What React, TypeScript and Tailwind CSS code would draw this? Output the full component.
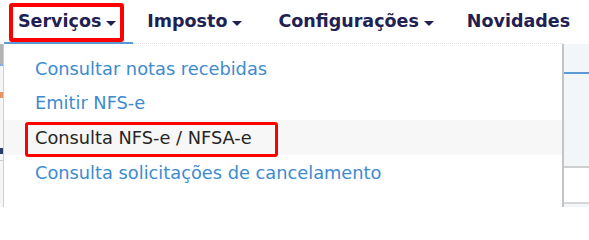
import React from "react";

const Caret = () => (
  <span className="ml-[5px] inline-block h-0 w-0 border-x-[5px] border-t-[5px] border-x-transparent border-t-[#1e2152] translate-y-[2px]" />
);

const NavItem = ({ label, caret, className }: { label: string; caret?: boolean; className?: string }) => (
  <div className={"flex items-center " + (className ?? "")}>
    <span className="font-bold text-[17.5px] text-[#1e2152] leading-none">{label}</span>
    {caret && <Caret />}
  </div>
);

export default function App() {
  const items = [
    { label: "Consultar notas recebidas", h: "h-[34px]" },
    { label: "Emitir NFS-e", h: "h-[34px]" },
    { label: "Consulta NFS-e / NFSA-e", h: "h-[35px]", active: true },
    { label: "Consulta solicitações de cancelamento", h: "h-[35px]" },
  ];
  return (
    <div
      className="relative w-[589px] h-[207px] overflow-hidden bg-white"
      style={{ fontFamily: '"DejaVu Sans", Verdana, sans-serif' }}
    >
      {/* top nav */}
      <div className="flex h-[42px] items-center pl-[18px] pt-[1px]">
        <NavItem label="Serviços" caret />
        <NavItem label="Imposto" caret className="ml-[31px]" />
        <NavItem label="Configurações" caret className="ml-[36px]" />
        <NavItem label="Novidades" className="ml-[33px]" />
      </div>
      {/* underline row */}
      <div className="flex h-[2px]">
        <div className="w-[4px]" />
        <div className="w-[129px] bg-[#5b9bd5]" />
        <div className="w-[430px] border-b border-dotted border-[#dcdcdc]" />
      </div>
      {/* body */}
      <div className="flex h-[163px]">
        {/* left background strip */}
        <div className="flex w-[3px] flex-col bg-[#f4f6f8]">
          <div className="h-[20px] bg-[#b4b4b4]" />
          <div className="h-[2px] bg-[#7fb0e0]" />
          <div className="h-[26px]" />
          <div className="h-[6px] bg-[#e8926a]" />
          <div className="h-[50px]" />
          <div className="h-[6px] bg-[#2c3e6a]" />
          <div className="h-[6px]" />
          <div className="h-[1px] bg-[#c8c8c8]" />
        </div>
        <div className="w-[1px] bg-[#cfcfcf]" />
        {/* dropdown panel */}
        <div className="flex w-[558px] flex-col bg-white pt-[8px]">
          {items.map((it) => (
            <div
              key={it.label}
              className={
                "flex items-center pl-[31px] text-[17.8px] leading-none " +
                it.h +
                " " +
                (it.active ? "bg-[#f7f7f7] text-[#262626]" : "text-[#3d8bcf]")
              }
            >
              {it.label}
            </div>
          ))}
        </div>
        <div className="w-[2px] bg-[#c4c4c4]" />
        {/* right background strip */}
        <div className="flex flex-1 flex-col bg-[#f3f6f9]">
          <div className="h-[28px]" />
          <div className="h-[2px] bg-[#5b9bd5]" />
          <div className="h-[92px]" />
          <div className="h-[2px] bg-[#cfcfcf]" />
          <div className="h-[34px] bg-white" />
          <div className="h-[2px] bg-[#d6d6d6]" />
        </div>
      </div>

      {/* red annotation boxes */}
      <div className="pointer-events-none absolute left-[9px] top-[3px] h-[39px] w-[115px] rounded-[3px] border-[4px] border-[#ff0000]" />
      <div className="pointer-events-none absolute left-[25px] top-[122px] h-[35px] w-[253px] rounded-[3px] border-[3px] border-[#ff0000]" />
    </div>
  );
}
